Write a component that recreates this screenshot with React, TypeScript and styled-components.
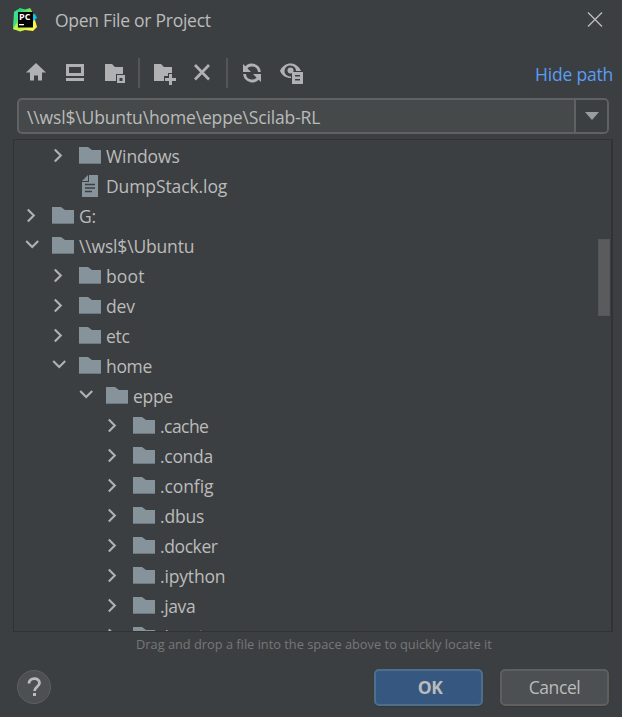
import React from 'react';
import styled, { createGlobalStyle } from 'styled-components';

const GlobalStyle = createGlobalStyle`
  * { box-sizing: border-box; }
  body { margin: 0; background: #3c3f41; }
  button { font: inherit; padding: 0; }
`;

const Dialog = styled.main`
  width: 622px;
  height: 717px;
  overflow: hidden;
  display: flex;
  flex-direction: column;
  background: #3c3f41;
  color: #bbbbbb;
  font-family: 'Open Sans', 'Noto Sans', sans-serif;
  font-size: 17.5px;
`;

const TitleBar = styled.header`
  height: 41px;
  flex: none;
  display: flex;
  align-items: center;
  padding: 0 19px 2px 12px;
`;

const Title = styled.h1`
  flex: 1;
  margin: 1px 0 0 17px;
  font-size: 17.5px;
  font-weight: 400;
  line-height: 24px;
  letter-spacing: -0.26px;
`;

const CloseButton = styled.button`
  width: 16px;
  height: 16px;
  border: 0;
  background: none;
  svg { display: block; }
`;

const Toolbar = styled.div`
  height: 58px;
  flex: none;
  display: flex;
  align-items: center;
  padding: 6px 9px 0 23px;
`;

const ToolGroup = styled.div`
  display: flex;
  gap: 13px;
`;

const Tool = styled.button<{ $width?: number }>`
  width: ${p => p.$width ?? 26}px;
  height: 26px;
  border: 0;
  background: none;
  color: #afb1b3;
  svg { display: block; }
`;

const Separator = styled.span`
  width: 2px;
  height: 30px;
  margin: 0 11px;
  background: #555555;
`;

const HidePath = styled.a`
  margin: 2px 0 0 auto;
  line-height: 24px;
  letter-spacing: -0.2px;
  color: #589df6;
`;

const PathField = styled.div`
  height: 36px;
  flex: none;
  margin: -1px 13px 0 17px;
  display: flex;
  border: 2px solid #5f6162;
  border-radius: 5px;
  background: #45494a;
  overflow: hidden;
`;

const PathText = styled.span`
  flex: 1;
  padding-left: 8px;
  line-height: 34px;
  letter-spacing: -0.14px;
`;

const DropButton = styled.button`
  width: 33px;
  border: 0;
  border-left: 2px solid #5f6162;
  background: #3c3f41;
  display: flex;
  align-items: center;
  justify-content: center;
`;

const TreePanel = styled.section`
  height: 493px;
  flex: none;
  margin: 5px 9px 0 13px;
  display: flex;
  border: 1px solid #323232;
  border-right-width: 2px;
  overflow: hidden;
`;

const TreeRows = styled.ul`
  flex: 1;
  margin: 0;
  padding: 1px 0 0 10px;
  list-style: none;
`;

const Row = styled.li<{ $depth: number }>`
  height: 30px;
  padding-left: ${p => p.$depth * 27}px;
  display: flex;
`;

const RowIcon = styled.span<{ $wide?: boolean }>`
  width: ${p => (p.$wide ? 27 : 28)}px;
  flex: none;
  svg { display: block; }
`;

const RowLabel = styled.span<{ $spacing: number }>`
  line-height: 30px;
  letter-spacing: ${p => p.$spacing}px;
  white-space: pre;
`;

const ScrollTrack = styled.div`
  width: 13px;
  padding-top: 99px;
`;

const ScrollThumb = styled.div`
  width: 12px;
  height: 77px;
  background: #595b5d;
  border: 1px solid #545658;
`;

const Hint = styled.p`
  height: 24px;
  margin: 0;
  padding-left: 136px;
  font-size: 12.8px;
  line-height: 24px;
  color: #777777;
  white-space: nowrap;
`;

const Footer = styled.footer`
  display: flex;
  align-items: center;
  gap: 17px;
  height: 38px;
  margin-top: 12px;
  padding: 0 13px 0 17px;
`;

const HelpButton = styled.button`
  width: 34px;
  height: 34px;
  margin-right: auto;
  border: 1.5px solid #5e6060;
  border-radius: 50%;
  background: #4c5052;
  color: #bbbbbb;
  display: flex;
  align-items: center;
  justify-content: center;
`;

const ActionButton = styled.button<{ $primary?: boolean }>`
  width: 109px;
  height: 37px;
  padding-left: ${p => (p.$primary ? 3 : 0)}px;
  border: 2px solid ${p => (p.$primary ? '#4c708c' : '#5e6060')};
  border-radius: 5px;
  background: ${p => (p.$primary ? '#365880' : '#4c5052')};
  color: #bbbbbb;
  font-weight: ${p => (p.$primary ? 700 : 400)};
  letter-spacing: -0.4px;
  line-height: 33px;
  box-shadow: 0 1px 1px #35383a;
`;

const Logo = () => (
  <svg width="26" height="26" viewBox="0 0 26 26">
    <defs>
      <linearGradient id="leaf" x1="0" y1="0" x2="1" y2="1">
        <stop offset="0.2" stopColor="#21d789" />
        <stop offset="0.55" stopColor="#b8ed48" />
        <stop offset="0.8" stopColor="#fcf84a" />
      </linearGradient>
    </defs>
    <path d="M2 5 8 1l5 1.500L18 1l3 5 2 7 2 7-4 4-8-1-5 1.500-7-2.500 1-9Z" fill="url(#leaf)" />
    <path d="m2 5 4-2-1 12-4 7Z" fill="#3be08a" />
    <path d="m20 8 3-1 2 4-4 3Z" fill="#07c3f2" />
    <path d="m1 22 4-6 1 6 4 2Z" fill="#c9f04a" />
    <rect x="6" y="5" width="15" height="15.500" fill="#000" />
    <text x="7" y="12.800" fontFamily="Open Sans, sans-serif" fontSize="9" fontWeight="700" fill="#fff" textLength="11.500">PC</text>
    <rect x="7" y="17" width="5" height="1.300" fill="#fff" />
  </svg>
);

const ToolSvg = ({ children }: { children: React.ReactNode }) => (
  <svg width="26" height="26" viewBox="0 0 26 26" fill="currentColor">{children}</svg>
);

const HomeIcon = () => (
  <ToolSvg><path d="M13 3 3 12.500h4v8h4v-5h4v5h4v-8h4Z" /></ToolSvg>
);
const DesktopIcon = () => (
  <ToolSvg><path fillRule="evenodd" d="M4 4h18v12H4Zm3 3v6h12V7ZM4 18h18v3H4Z" /></ToolSvg>
);
const ProjectDirIcon = () => (
  <ToolSvg>
    <path d="M4 4h7l3 3h8v7h-7v7H4Z" />
    <path fillRule="evenodd" d="M16 15h8v8h-8Zm2.500 3v3h3v-3Z" />
  </ToolSvg>
);
const NewFolderIcon = () => (
  <ToolSvg>
    <path d="M3 4h7l3 3h8v6h-4v3h-4v5H3Z" />
    <path d="M18 14h3v4h4v3h-4v4h-3v-4h-4v-3h4Z" />
  </ToolSvg>
);
const DeleteIcon = () => (
  <ToolSvg><path d="m5 5 14 14.500M19 5 5 19.500" stroke="currentColor" strokeWidth="2.700" /></ToolSvg>
);
const RefreshIcon = () => (
  <ToolSvg>
    <path d="M6.200 9.200A7.500 7.500 0 0 1 20.400 12M5.600 14A7.500 7.500 0 0 0 19.800 16.800" fill="none" stroke="currentColor" strokeWidth="2.800" />
    <path d="M4 4v8h8ZM22 22v-8h-8Z" />
  </ToolSvg>
);
const ShowHiddenIcon = () => (
  <ToolSvg>
    <path fillRule="evenodd" d="M2 11C6 1 19 1 23 11H13v7C8 18 4 15.500 2 11Zm10.500-5.500a5.500 5.500 0 0 0-1 11H13V11h5a5.500 5.500 0 0 0-5.500-5.500Z" />
    <circle cx="12.500" cy="10.500" r="3" />
    <path fillRule="evenodd" d="M14 12h11v12H14Zm3 3v1.500h5V15Zm0 4v1.500h5V19Z" />
  </ToolSvg>
);

const FolderIcon = () => (
  <svg width="22" height="30" viewBox="0 0 22 30">
    <path d="M0 6h9l4 3h9v14H0Z" fill="#87939a" />
    <path d="M0 22.500h22" stroke="#6d787e" />
  </svg>
);
const FileIcon = () => (
  <svg width="22" height="30" viewBox="0 0 22 30">
    <path d="M10 4h9v22H3V11h7Z" fill="#87939a" />
    <path d="M3 10 9 4v6Z" fill="#87939a" />
    <path d="M6 13.500h10M6 17h10M6 20.500h7" stroke="#3c3f41" strokeWidth="1.500" />
  </svg>
);
const Chevron = ({ open }: { open?: boolean }) => (
  <svg width="28" height="30" viewBox="0 0 28 30" fill="none" stroke="#afb1b3" strokeWidth="2.100">
    <path d={open ? 'm2.200 10 6 6 6-6' : 'm3.800 8.500 6 6-6 6'} />
  </svg>
);

type Entry = { name: string; depth: number; kind?: 'open' | 'file'; spacing: number };

const entries: Entry[] = [
  { name: 'Windows', depth: 1, spacing: -0.1 },
  { name: 'DumpStack.log', depth: 1, kind: 'file', spacing: -0.1 },
  { name: 'G:', depth: 0, spacing: -0.3 },
  { name: '\\\\wsl$\\Ubuntu', depth: 0, kind: 'open', spacing: -0.17 },
  { name: 'boot', depth: 1, spacing: 0.15 },
  { name: 'dev', depth: 1, spacing: -0.2 },
  { name: 'etc', depth: 1, spacing: -0.3 },
  { name: 'home', depth: 1, kind: 'open', spacing: -0.35 },
  { name: 'eppe', depth: 2, kind: 'open', spacing: -0.3 },
  { name: '.cache', depth: 3, spacing: -0.55 },
  { name: '.conda', depth: 3, spacing: -0.3 },
  { name: '.config', depth: 3, spacing: -0.1 },
  { name: '.dbus', depth: 3, spacing: -0.2 },
  { name: '.docker', depth: 3, spacing: -0.4 },
  { name: '.ipython', depth: 3, spacing: -0.16 },
  { name: '.java', depth: 3, spacing: -0.4 },
  { name: '.jupyter', depth: 3, spacing: -0.2 },
];

export default function App() {
  return (
    <>
      <GlobalStyle />
      <Dialog>
        <TitleBar>
          <Logo />
          <Title>Open File or Project</Title>
          <CloseButton aria-label="Close">
            <svg width="16" height="16" viewBox="0 0 16 16">
              <path d="m1 0.500 14 14M15 0.500 1 14.500" stroke="#bbbbbb" strokeWidth="1.400" />
            </svg>
          </CloseButton>
        </TitleBar>
        <Toolbar>
          <ToolGroup>
            <Tool aria-label="Home"><HomeIcon /></Tool>
            <Tool aria-label="Desktop"><DesktopIcon /></Tool>
            <Tool aria-label="Project directory"><ProjectDirIcon /></Tool>
          </ToolGroup>
          <Separator />
          <ToolGroup>
            <Tool aria-label="New folder"><NewFolderIcon /></Tool>
            <Tool $width={25} aria-label="Delete"><DeleteIcon /></Tool>
          </ToolGroup>
          <Separator />
          <ToolGroup>
            <Tool aria-label="Refresh"><RefreshIcon /></Tool>
            <Tool aria-label="Show hidden files"><ShowHiddenIcon /></Tool>
          </ToolGroup>
          <HidePath>Hide path</HidePath>
        </Toolbar>
        <PathField>
          <PathText>{'\\\\wsl$\\Ubuntu\\home\\eppe\\Scilab-RL'}</PathText>
          <DropButton aria-label="Recent paths">
            <svg width="14" height="8" viewBox="0 0 14 8"><path d="M0 0h14L7 8Z" fill="#9a9da0" /></svg>
          </DropButton>
        </PathField>
        <TreePanel>
          <TreeRows>
            {entries.map(e => (
              <Row key={e.name} $depth={e.depth}>
                <RowIcon>{e.kind !== 'file' && <Chevron open={e.kind === 'open'} />}</RowIcon>
                <RowIcon $wide>{e.kind === 'file' ? <FileIcon /> : <FolderIcon />}</RowIcon>
                <RowLabel $spacing={e.spacing}>{e.name}</RowLabel>
              </Row>
            ))}
          </TreeRows>
          <ScrollTrack><ScrollThumb /></ScrollTrack>
        </TreePanel>
        <Hint>Drag and drop a file into the space above to quickly locate it</Hint>
        <Footer>
          <HelpButton aria-label="Help">
            <svg width="16" height="22" viewBox="0 0 16 22">
              <path d="M3 7.500C3 1 13.500 1 13.500 7c0 3.500-5 4-5 8" fill="none" stroke="currentColor" strokeWidth="2.800" />
              <rect x="7" y="17" width="3" height="3" fill="currentColor" />
            </svg>
          </HelpButton>
          <ActionButton $primary>OK</ActionButton>
          <ActionButton>Cancel</ActionButton>
        </Footer>
      </Dialog>
    </>
  );
}
